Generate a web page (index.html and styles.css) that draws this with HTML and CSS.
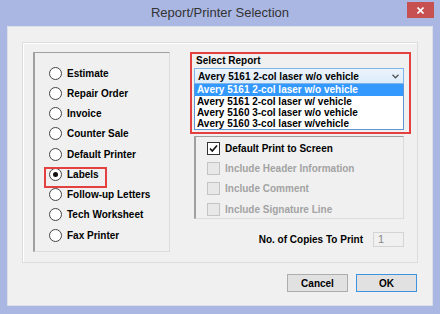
FILE: index.html
```html
<!DOCTYPE html>
<html lang="en">
<head>
    <meta charset="UTF-8">
    <title>Report/Printer Selection</title>
    <link rel="stylesheet" href="styles.css">
</head>
<body>
    <div class="window">
        <div class="titlebar">
            <span class="title">Report/Printer Selection</span>
            <span class="close">
                <svg width="7" height="7" viewBox="0 0 7 7"><path d="M0.5 0.5L6.5 6.5M6.5 0.5L0.5 6.5" stroke="#fff" stroke-width="1.6"/></svg>
            </span>
        </div>

        <div class="client">
            <div class="group">
                <div class="radios">
                    <label class="row"><span class="radio"></span>Estimate</label>
                    <label class="row"><span class="radio"></span>Repair Order</label>
                    <label class="row"><span class="radio"></span>Invoice</label>
                    <label class="row"><span class="radio"></span>Counter Sale</label>
                    <label class="row"><span class="radio"></span>Default Printer</label>
                    <label class="row hl"><span class="radio on"></span>Labels</label>
                    <label class="row"><span class="radio"></span>Follow-up Letters</label>
                    <label class="row"><span class="radio"></span>Tech Worksheet</label>
                    <label class="row"><span class="radio"></span>Fax Printer</label>
                </div>

                <div class="right">
                    <div class="report-box">
                        <div class="label">Select Report</div>
                        <div class="select">
                            <span>Avery 5161 2-col laser w/o vehicle</span>
                            <svg width="7" height="5" viewBox="0 0 7 5"><path d="M0.5 0.8L3.5 3.8L6.5 0.8" fill="none" stroke="#555" stroke-width="1.3"/></svg>
                        </div>
                        <ul class="options">
                            <li class="sel">Avery 5161 2-col laser w/o vehicle</li>
                            <li>Avery 5161 2-col laser w/ vehicle</li>
                            <li>Avery 5160 3-col laser w/o vehicle</li>
                            <li>Avery 5160 3-col laser w/vehicle</li>
                        </ul>
                    </div>

                    <div class="checks">
                        <label class="row">
                            <span class="check">
                                <svg width="11" height="11" viewBox="0 0 11 11"><path d="M2 5.5L4.3 8L9 2.5" fill="none" stroke="#111" stroke-width="1.6"/></svg>
                            </span>
                            Default Print to Screen
                        </label>
                        <label class="row off"><span class="check"></span>Include Header Information</label>
                        <label class="row off"><span class="check"></span>Include Comment</label>
                        <label class="row off"><span class="check"></span>Include Signature Line</label>
                    </div>

                    <div class="copies">
                        <span>No. of Copies To Print</span>
                        <span class="num">1</span>
                    </div>
                </div>
            </div>

            <div class="buttons">
                <button>Cancel</button>
                <button class="ok">OK</button>
            </div>
        </div>
    </div>
</body>
</html>
```

FILE: styles.css
```css
body {
    margin: 0;
    padding: 0;
    font-family: "Liberation Sans", Arial, sans-serif;
}
.window {
    width: 440px;
    height: 314px;
    box-sizing: border-box;
    padding: 0 7px 8px 7px;
    background-color: #aab7e3;
}
.titlebar {
    height: 26px;
    display: grid;
    grid-template-columns: 1fr auto 1fr;
    margin: 0 -7px;
}
.titlebar .title {
    grid-column: 2;
    font-size: 13px;
    color: #333;
    line-height: 26px;
}
.titlebar .close {
    grid-column: 3;
    justify-self: end;
    width: 27px;
    height: 16px;
    margin: 2px 6px 0 0;
    background-color: #c75050;
    display: flex;
    align-items: center;
    justify-content: center;
}
.client {
    height: 280px;
    box-sizing: border-box;
    background-color: #f0f0f0;
    border: 1px solid #dde0ea;
    font-size: 10px;
    font-weight: bold;
    color: #000;
}
.group {
    height: 221px;
    box-sizing: border-box;
    margin: 15px 14px 0 14px;
    border: 1px solid #dcdcdc;
    box-shadow: inset 1px 1px 0 #fff;
    padding: 9px 6px 10px 10px;
    display: grid;
    grid-template-columns: 137px 221px;
    column-gap: 20px;
}
.radios {
    height: 200px;
    box-sizing: border-box;
    border-top: 1px solid #a0a0a0;
    border-left: 2px solid #a0a0a0;
    border-right: 1px solid #dcdcdc;
    border-bottom: 1px solid #dcdcdc;
    padding: 10px 0 0 14px;
}
.row {
    display: flex;
    align-items: center;
    gap: 5px;
    height: 20.25px;
    white-space: nowrap;
}
.radio {
    width: 13px;
    height: 13px;
    box-sizing: border-box;
    border: 1px solid #444;
    border-radius: 50%;
    background-color: #fff;
    display: flex;
    align-items: center;
    justify-content: center;
}
.radio.on::before {
    content: "";
    width: 5px;
    height: 5px;
    border-radius: 50%;
    background-color: #111;
}
.hl {
    position: relative;
}
.hl::after {
    content: "";
    position: absolute;
    left: -5px;
    top: 3px;
    width: 63px;
    height: 21px;
    box-sizing: border-box;
    border: 2px solid #e3403f;
}
.right {
    display: flex;
    flex-direction: column;
}
.report-box {
    height: 82px;
    box-sizing: border-box;
    border: 2px solid #e3403f;
    padding: 1px 5px 2px 2px;
}
.report-box .label {
    line-height: 12px;
    margin-bottom: 1px;
    padding-left: 2px;
}
.select {
    height: 16px;
    box-sizing: border-box;
    border: 1px solid #7eb4ea;
    background: linear-gradient(#ecf4fc, #dcecfc);
    display: flex;
    align-items: center;
    justify-content: space-between;
    padding: 0 4px 0 3px;
    white-space: nowrap;
}
.options {
    list-style: none;
    margin: 0;
    padding: 0;
    border: 1px solid #5f95d6;
    border-top: none;
    background-color: #fff;
}
.options li {
    height: 11px;
    line-height: 11px;
    padding-left: 2px;
    white-space: nowrap;
}
.options li:first-child {
    height: 12px;
    line-height: 12px;
}
.options li.sel {
    background-color: #3399ff;
    color: #fff;
}
.checks {
    height: 83px;
    box-sizing: border-box;
    margin: 2px 7px 0 4px;
    border-top: 1px solid #a0a0a0;
    border-left: 2px solid #a0a0a0;
    border-right: 1px solid #dcdcdc;
    border-bottom: 1px solid #dcdcdc;
    padding: 1px 0 0 11px;
}
.checks .row {
    gap: 5px;
    height: 20.3px;
}
.check {
    width: 13px;
    height: 13px;
    box-sizing: border-box;
    border: 1px solid #333;
    background-color: #fff;
    display: flex;
    align-items: center;
    justify-content: center;
}
.row.off {
    color: #a3a3a3;
}
.row.off .check {
    border-color: #c4c4c4;
    background-color: #e8e8e8;
}
.copies {
    margin: 13px 7px 0 0;
    display: flex;
    justify-content: flex-end;
    align-items: center;
    gap: 10px;
}
.copies .num {
    width: 31px;
    height: 15px;
    box-sizing: border-box;
    border: 1px solid #d4d4d4;
    background-color: #f0f0f0;
    color: #888;
    font-weight: normal;
    font-size: 11px;
    line-height: 13px;
    padding-left: 4px;
}
.buttons {
    margin: 11px 15px 0 0;
    display: flex;
    justify-content: flex-end;
    gap: 8px;
}
.buttons button {
    width: 61px;
    height: 18px;
    padding: 0;
    font-family: "Liberation Sans", Arial, sans-serif;
    font-size: 10px;
    font-weight: bold;
    color: #000;
    background-color: #e1e1e1;
    border: 1px solid #adadad;
}
.buttons button.ok {
    border-color: #3c94e0;
}
```
